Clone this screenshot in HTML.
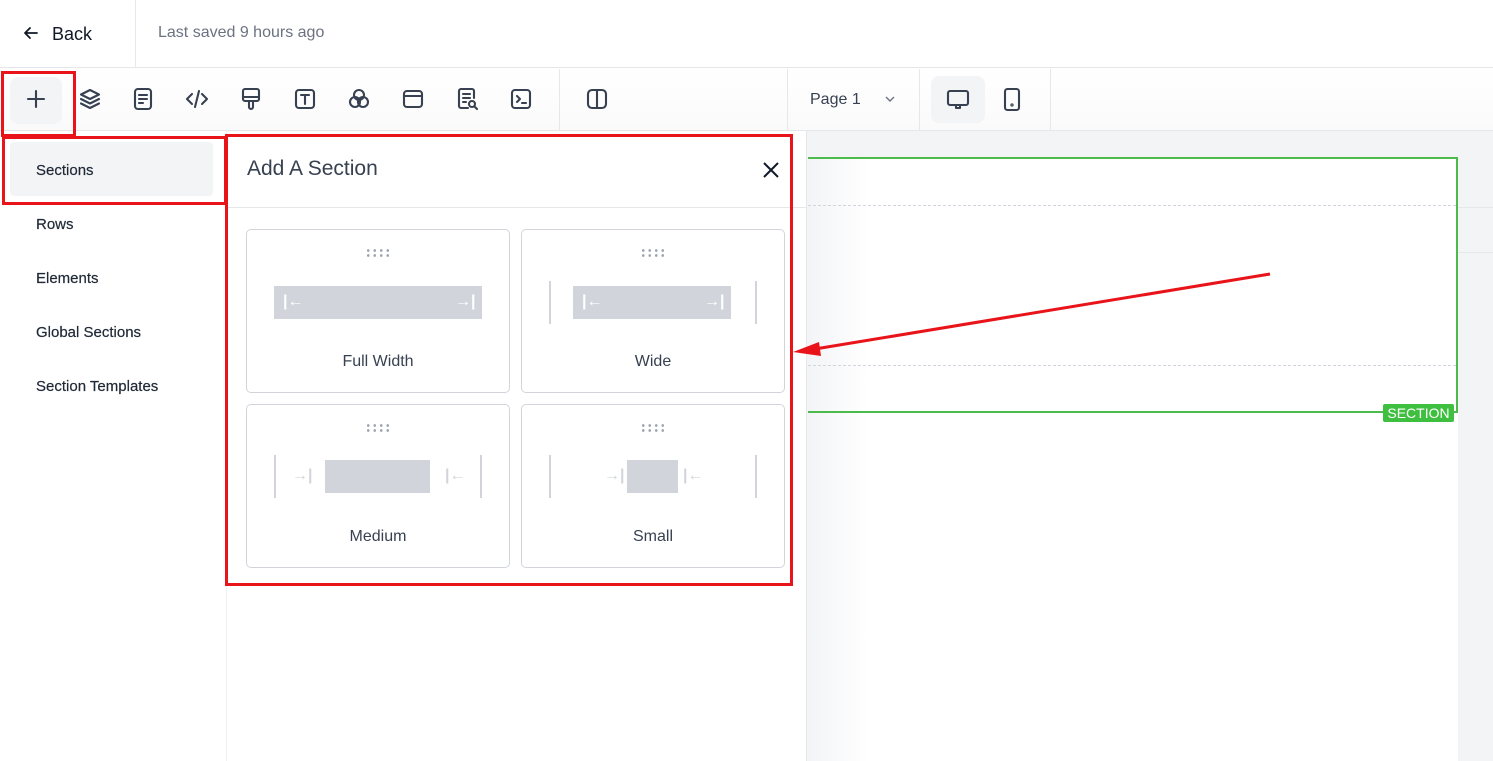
<!DOCTYPE html>
<html><head><style>
*{box-sizing:border-box;margin:0;padding:0}
body{width:1493px;height:761px;overflow:hidden;background:#fff;font-family:"Liberation Sans",sans-serif;position:relative;color:#1f2937}
.a{position:absolute}
.ic{position:absolute;top:86px;width:26px;height:26px}
.ic svg{width:26px;height:26px;fill:none;stroke:#374151;stroke-width:2.1;stroke-linecap:round;stroke-linejoin:round}
.nav{position:absolute;left:36px;font-size:15px;color:#1f2937;-webkit-text-stroke:0.2px #1f2937}
.card{position:absolute;width:264px;height:164px;border:1px solid #d1d5db;border-radius:5px;background:#fff}
.card .lbl{position:absolute;left:0;right:0;text-align:center;top:123px;font-size:16px;color:#374151}
.dots{position:absolute;left:118px;top:18px;width:26px;height:10px;background:radial-gradient(circle,#9ca3af 1.2px,transparent 1.5px) 0 0/6.5px 5px}
</style></head><body>
<div class="a" style="left:0;top:0;width:1493px;height:68px;border-bottom:1px solid #e5e7eb"></div>
<svg class="a" style="left:22px;top:24px" width="18" height="18" viewBox="0 0 18 18"><path d="M15 9H3M8 4L3 9l5 5" fill="none" stroke="#111827" stroke-width="1.8" stroke-linecap="round" stroke-linejoin="round"/></svg>
<div class="a" style="left:52px;top:24px;font-size:18px;color:#111827">Back</div>
<div class="a" style="left:135px;top:0;width:1px;height:68px;background:#e5e7eb"></div>
<div class="a" style="left:158px;top:24px;font-size:16px;color:#6b7280">Last saved 9 hours ago</div>
<div class="a" style="left:0;top:69px;width:1493px;height:62px;background:linear-gradient(#fff,#fafafa);border-bottom:1px solid #e5e7eb"></div>
<div class="a" style="left:10px;top:77px;width:52px;height:47px;background:#f3f4f6;border-radius:8px"></div>
<div class="ic" style="left:23px"><svg viewBox="0 0 26 26"><path d="M13 5v16M5 13h16"/></svg></div>
<div class="ic" style="left:77px"><svg viewBox="0 0 26 26"><path d="M13 4l9 4.5-9 4.5-9-4.5z M4 13l9 4.5 9-4.5 M4 17.5l9 4.5 9-4.5"/></svg></div>
<div class="ic" style="left:130px"><svg viewBox="0 0 26 26"><rect x="5" y="3" width="16" height="20" rx="3"/><path d="M9 9h8M9 13h8M9 17h4"/></svg></div>
<div class="ic" style="left:184px"><svg viewBox="0 0 26 26"><path d="M8 8l-5 5 5 5M18 8l5 5-5 5M15 5l-4 16"/></svg></div>
<div class="ic" style="left:238px"><svg viewBox="0 0 26 26"><rect x="5" y="3" width="16" height="12" rx="2"/><path d="M5 11h16M11 15v6a2 2 0 004 0v-6"/></svg></div>
<div class="ic" style="left:292px"><svg viewBox="0 0 26 26"><rect x="4" y="4" width="18" height="18" rx="3"/><path d="M9 9h8M13 9v9"/></svg></div>
<div class="ic" style="left:346px"><svg viewBox="0 0 26 26"><circle cx="13" cy="9" r="5"/><circle cx="9" cy="16" r="5"/><circle cx="17" cy="16" r="5"/></svg></div>
<div class="ic" style="left:400px"><svg viewBox="0 0 26 26"><rect x="4" y="5" width="18" height="16" rx="3"/><path d="M4 10h18"/></svg></div>
<div class="ic" style="left:454px"><svg viewBox="0 0 26 26"><path d="M14 22H7a2 2 0 01-2-2V5a2 2 0 012-2h11a2 2 0 012 2v7M9 8h7M9 12h7M9 16h3"/><circle cx="18" cy="18" r="3"/><path d="M20.5 20.5L23 23"/></svg></div>
<div class="ic" style="left:508px"><svg viewBox="0 0 26 26"><rect x="4" y="4" width="18" height="18" rx="3"/><path d="M9 10l3 3-3 3M14 17h4"/></svg></div>
<div class="a" style="left:559px;top:69px;width:1px;height:62px;background:#e5e7eb"></div>
<div class="ic" style="left:584px"><svg viewBox="0 0 26 26"><rect x="4" y="4" width="18" height="18" rx="4"/><path d="M13 4v18"/></svg></div>
<div class="a" style="left:787px;top:69px;width:1px;height:62px;background:#e5e7eb"></div>
<div class="a" style="left:810px;top:91px;font-size:16px;color:#374151">Page 1</div>
<svg class="a" style="left:884px;top:95px" width="12" height="8" viewBox="0 0 12 8"><path d="M2 2l4 4 4-4" fill="none" stroke="#6b7280" stroke-width="1.4"/></svg>
<div class="a" style="left:919px;top:69px;width:1px;height:62px;background:#e5e7eb"></div>
<div class="a" style="left:931px;top:76px;width:54px;height:47px;background:#f3f4f6;border-radius:8px"></div>
<div class="ic" style="left:945px"><svg viewBox="0 0 26 26"><rect x="3" y="5" width="20" height="14" rx="2"/><path d="M11 19v3h4v-3"/></svg></div>
<div class="ic" style="left:999px"><svg viewBox="0 0 26 26"><rect x="6" y="3" width="14" height="21" rx="2.5"/><circle cx="13" cy="19" r=".6"/></svg></div>
<div class="a" style="left:1050px;top:69px;width:1px;height:62px;background:#e5e7eb"></div>
<div class="a" style="left:10px;top:142px;width:203px;height:54px;background:#f3f4f6;border-radius:4px"></div>
<div class="nav" style="top:162px">Sections</div>
<div class="nav" style="top:216px">Rows</div>
<div class="nav" style="top:270px">Elements</div>
<div class="nav" style="top:324px">Global Sections</div>
<div class="nav" style="top:378px">Section Templates</div>
<div class="a" style="left:807px;top:131px;width:686px;height:630px;background:#f3f4f6"></div>
<div class="a" style="left:808px;top:157px;width:650px;height:604px;background:linear-gradient(90deg,#f3f4f6,#fff 60px)"></div>
<div class="a" style="left:808px;top:157px;width:650px;height:256px;border:2px solid #4cbb4c;border-left:none"></div>
<div class="a" style="left:808px;top:205px;width:648px;border-top:1px dashed #d4d4e0"></div>
<div class="a" style="left:808px;top:365px;width:648px;border-top:1px dashed #d4d4e0"></div>
<div class="a" style="left:1383px;top:404px;width:71px;height:18px;background:#3fbf3f;border-radius:2px;color:#fff;font-size:14px;text-align:center;line-height:18px">SECTION</div>
<div class="a" style="left:1458px;top:207px;width:35px;height:1px;background:#e5e7eb"></div>
<div class="a" style="left:1458px;top:252px;width:35px;height:1px;background:#e5e7eb"></div>
<div class="a" style="left:226px;top:131px;width:581px;height:630px;background:#fff;border-left:1px solid #f0f0f0;border-right:1px solid #e5e7eb"></div>
<div class="a" style="left:247px;top:157px;font-size:21px;color:#374151">Add A Section</div>
<svg class="a" style="left:762px;top:161px" width="18" height="18" viewBox="0 0 18 18"><path d="M2 2l14 14M16 2L2 16" stroke="#111827" stroke-width="2"/></svg>
<div class="a" style="left:227px;top:207px;width:579px;height:1px;background:#e5e7eb"></div>
<div class="card" style="left:246px;top:229px"><div class="dots"></div>
 <div class="a" style="left:27px;top:56px;width:208px;height:33px;background:#d1d5db"></div>
 <div class="a" style="left:36px;top:63px;color:#fff;font-size:16px;font-weight:bold">|←</div>
 <div class="a" style="left:208px;top:63px;color:#fff;font-size:16px;font-weight:bold">→|</div>
 <div class="lbl">Full Width</div></div>
<div class="card" style="left:521px;top:229px"><div class="dots"></div>
 <div class="a" style="left:27px;top:51px;width:2px;height:43px;background:#d1d5db"></div>
 <div class="a" style="left:233px;top:51px;width:2px;height:43px;background:#d1d5db"></div>
 <div class="a" style="left:51px;top:56px;width:158px;height:33px;background:#d1d5db"></div>
 <div class="a" style="left:60px;top:63px;color:#fff;font-size:16px;font-weight:bold">|←</div>
 <div class="a" style="left:182px;top:63px;color:#fff;font-size:16px;font-weight:bold">→|</div>
 <div class="lbl">Wide</div></div>
<div class="card" style="left:246px;top:404px"><div class="dots"></div>
 <div class="a" style="left:27px;top:50px;width:2px;height:43px;background:#d1d5db"></div>
 <div class="a" style="left:233px;top:50px;width:2px;height:43px;background:#d1d5db"></div>
 <div class="a" style="left:78px;top:55px;width:105px;height:33px;background:#d1d5db"></div>
 <div class="a" style="left:45px;top:62px;color:#d1d5db;font-size:16px;font-weight:bold">→|</div>
 <div class="a" style="left:198px;top:62px;color:#d1d5db;font-size:16px;font-weight:bold">|←</div>
 <div class="lbl">Medium</div></div>
<div class="card" style="left:521px;top:404px"><div class="dots"></div>
 <div class="a" style="left:27px;top:50px;width:2px;height:43px;background:#d1d5db"></div>
 <div class="a" style="left:233px;top:50px;width:2px;height:43px;background:#d1d5db"></div>
 <div class="a" style="left:105px;top:55px;width:51px;height:33px;background:#d1d5db"></div>
 <div class="a" style="left:82px;top:62px;color:#d1d5db;font-size:16px;font-weight:bold">→|</div>
 <div class="a" style="left:161px;top:62px;color:#d1d5db;font-size:16px;font-weight:bold">|←</div>
 <div class="lbl">Small</div></div>
<div class="a" style="left:1px;top:71px;width:75px;height:66px;border:3px solid #e8141a"></div>
<div class="a" style="left:2px;top:136px;width:225px;height:69px;border:3px solid #e8141a"></div>
<div class="a" style="left:225px;top:134px;width:568px;height:452px;border:3px solid #e8141a"></div>
<svg class="a" style="left:0;top:0" width="1493" height="761"><line x1="1270" y1="274" x2="815" y2="349" stroke="#e8141a" stroke-width="3"/><path d="M793 352l26-10 2 14z" fill="#e8141a"/></svg>
</body></html>
